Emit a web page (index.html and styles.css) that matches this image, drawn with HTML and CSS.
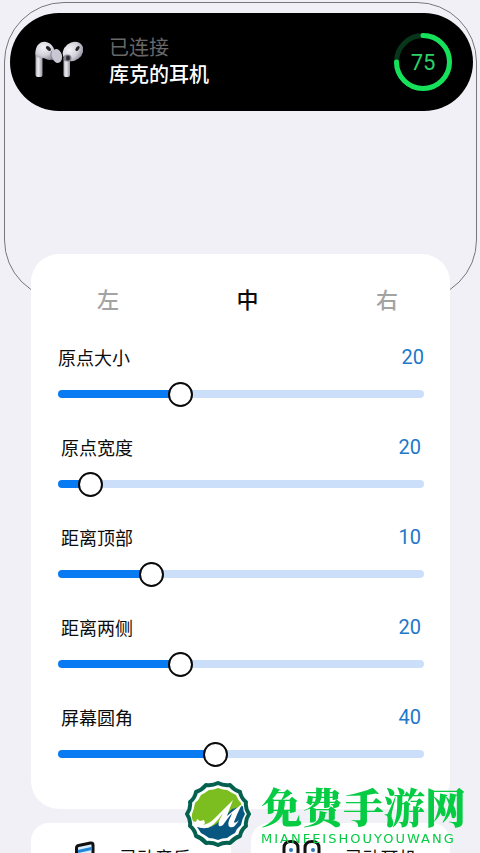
FILE: index.html
```html
<!DOCTYPE html>
<html lang="zh-CN">
<head>
    <meta charset="UTF-8">
    <meta name="viewport" content="width=device-width, initial-scale=1.0">
    <title>灵动设置</title>
    <link rel="stylesheet" href="styles.css">
</head>
<body>
    <header class="screen-frame">
        <div class="island">
            <svg class="earbuds" viewBox="0 0 48 38" aria-hidden="true">
                <defs>
                    <linearGradient id="stem" x1="0" x2="1" y1="0" y2="0">
                        <stop offset="0" stop-color="#aaa9b0"/>
                        <stop offset=".4" stop-color="#ededf1"/>
                        <stop offset="1" stop-color="#96959d"/>
                    </linearGradient>
                    <radialGradient id="bud" cx=".4" cy=".3" r=".75">
                        <stop offset="0" stop-color="#f4f3f8"/>
                        <stop offset=".6" stop-color="#d2d1d9"/>
                        <stop offset="1" stop-color="#8e8d98"/>
                    </radialGradient>
                </defs>
                <path d="M.5 12V35q0 2 2 2h3q2 0 2-2V18z" fill="url(#stem)"/>
                <path d="M.5 14C0 6 5 1 11 2c5 1 8 5 9 10 1 4-1 8-5 8-3 0-5-2-8-2-2 0-6 0-6.500-4z" fill="url(#bud)"/>
                <ellipse cx="22" cy="16" rx="5" ry="7" transform="rotate(-15 22 16)" fill="#c9c7d4"/>
                <path d="M16.500 11q-2 4 1 9" fill="none" stroke="#8f8d9b" stroke-width="1"/>
                <ellipse cx="13.500" cy="8.500" rx="3" ry="1.700" transform="rotate(42 13.500 8.500)" fill="#242428"/>
                <path d="M28.500 18V35q0 2 2 2h2.500q2 0 2-2V18z" fill="url(#stem)"/>
                <ellipse cx="38" cy="11.500" rx="11" ry="9" transform="rotate(-38 38 11.500)" fill="url(#bud)"/>
                <ellipse cx="32.500" cy="18" rx="4" ry="3.500" fill="#85838e"/>
                <ellipse cx="33" cy="18" rx="2" ry="2.500" fill="#2b2a30"/>
                <ellipse cx="42.500" cy="8.500" rx="2.800" ry="1.600" transform="rotate(-52 42.500 8.500)" fill="#242428"/>
            </svg>
            <div class="device">
                <span class="device-state">已连接</span>
                <span class="device-name">库克的耳机</span>
            </div>
            <div class="battery">
                <svg viewBox="0 0 58 58" aria-hidden="true">
                    <circle cx="29" cy="29" r="26.500" fill="none" stroke="#07361a" stroke-width="5"/>
                    <circle cx="29" cy="29" r="26.500" fill="none" stroke="#16e15a" stroke-width="5" stroke-linecap="round" pathLength="100" stroke-dasharray="75 25" transform="rotate(-90 29 29)"/>
                </svg>
                <span class="battery-value">75</span>
            </div>
        </div>
    </header>

    <main class="panel">
        <div class="tabs">
            <button class="tab" type="button">左</button>
            <button class="tab active" type="button">中</button>
            <button class="tab" type="button">右</button>
        </div>
        <div class="setting first">
            <div class="setting-head">
                <label for="dotSize">原点大小</label>
                <output for="dotSize">20</output>
            </div>
            <input type="range" id="dotSize" min="0" max="62" value="20" style="--fill: 32%">
        </div>
        <div class="setting">
            <div class="setting-head">
                <label for="dotWidth">原点宽度</label>
                <output for="dotWidth">20</output>
            </div>
            <input type="range" id="dotWidth" min="0" max="333" value="20" style="--fill: 6%">
        </div>
        <div class="setting">
            <div class="setting-head">
                <label for="topSpace">距离顶部</label>
                <output for="topSpace">10</output>
            </div>
            <input type="range" id="topSpace" min="0" max="42" value="10" style="--fill: 24%">
        </div>
        <div class="setting">
            <div class="setting-head">
                <label for="sideSpace">距离两侧</label>
                <output for="sideSpace">20</output>
            </div>
            <input type="range" id="sideSpace" min="0" max="62" value="20" style="--fill: 32%">
        </div>
        <div class="setting">
            <div class="setting-head">
                <label for="corner">屏幕圆角</label>
                <output for="corner">40</output>
            </div>
            <input type="range" id="corner" min="0" max="94" value="40" style="--fill: 42%">
        </div>
    </main>

    <nav class="tiles">
        <a class="tile" href="#music">
            <svg class="tile-icon" viewBox="0 0 40 40" aria-hidden="true">
                <path d="M15.500 31V11q0-2 2-2.500l12-2.500q2.500-.5 2.500 2v22" fill="#d9efff" stroke="#111" stroke-width="3"/>
                <path d="M17 14.500l13.500-3" stroke="#2286d8" stroke-width="3"/>
                <circle cx="11" cy="32" r="5" fill="#fff" stroke="#111" stroke-width="3"/>
                <circle cx="28" cy="30" r="5" fill="#fff" stroke="#111" stroke-width="3"/>
            </svg>
            <span>灵动音乐</span>
        </a>
        <a class="tile" href="#earbuds">
            <svg class="tile-icon wide" viewBox="0 0 46 40" aria-hidden="true">
                <path d="M10 37V22H3V11q0-6.500 7-6.500t7 6.500v26zM31 37V22h7V11q0-6.500-7-6.500t-7 6.500v26z" fill="#fff" stroke="#111" stroke-width="3" stroke-linejoin="round"/>
                <circle cx="10" cy="13" r="2" fill="#2d78bd"/>
                <circle cx="32" cy="13" r="2" fill="#2d78bd"/>
            </svg>
            <span>灵动耳机</span>
        </a>
    </nav>

    <div class="watermark">
        <svg class="watermark-logo" viewBox="0 0 66 66" aria-hidden="true">
            <path d="M33 2Q39 5 45 4Q49 9 55 11Q56 17 61 21Q60 27 64 33Q60 39 61 45Q56 49 55 55Q49 57 45 62Q39 61 33 64Q27 61 21 62Q17 57 11 55Q10 49 5 45Q6 39 2 33Q6 27 5 21Q10 17 11 11Q17 9 21 4Q27 5 33 2Z" fill="#fff" stroke="#04604f" stroke-width="4" stroke-linejoin="round"/>
            <path d="M9 42Q6 37 7 33Q9 28 10 22Q14 19 16 14Q20 12 24 9Q29 9 33 7Q38 9 42 9Q47 12 51 14Q53 19 56 22L57 26L48 28L34 44L18 47Z" fill="#7cbd20"/>
            <path d="M12 46Q24 50 35 40L47 28L58 25Q58 30 60 33Q57 38 56 44Q52 47 50 52Q46 54 42 57Q37 57 33 59Q28 57 24 57Q20 54 16 52Z" fill="#075780"/>
            <path d="M10 43Q21 47 31 36Q38 29 48 19Q44 29 42 35Q49 29 57 23Q52 33 49 41Q50 43 54 39Q49 48 45 46Q41 44 46 35L47 32Q42 38 38 44Q32 48 34 40L38 32Q34 38 29 43Q19 51 10 43Z" fill="#fff"/>
            <path d="M8 40l3 1 1-3 3 2 4-1 1 3-3 4-6-1z" fill="#fff"/>
        </svg>
        <div class="watermark-text">
            <strong>免费手游网</strong>
            <span>MIANFEISHOUYOUWANG</span>
        </div>
    </div>
</body>
</html>
```

FILE: styles.css
```css
* {
    box-sizing: border-box;
}
body {
    margin: 0;
    padding: 2px 0 0;
    background-color: #f1f0f7;
    color: #0c0c0c;
    font-family: Roboto, "Noto Sans CJK SC", sans-serif;
    font-size: 18px;
    overflow-x: hidden;
}
.screen-frame {
    height: 298px;
    margin: 0 3px 0 4px;
    padding: 10px 3px 0 5px;
    border: 1px solid #77777b;
    border-radius: 60px;
}
.island {
    display: flex;
    align-items: center;
    height: 98px;
    padding: 0 21px 0 25px;
    border-radius: 49px;
    background-color: #000;
}
.earbuds {
    width: 48px;
    height: 38px;
    margin-bottom: 6px;
}
.device {
    display: flex;
    flex-direction: column;
    flex: 1;
    margin-left: 26px;
    font-size: 20px;
    line-height: 27px;
}
.device-state {
    color: #68686a;
}
.device-name {
    color: #fff;
    font-weight: 500;
}
.battery {
    display: grid;
    place-items: center;
    width: 58px;
    height: 58px;
    color: #2bd267;
    font-size: 22px;
}
.battery svg,
.battery-value {
    grid-area: 1 / 1;
}
.battery svg {
    width: 58px;
    height: 58px;
}

/* settings card, overlaps the bottom of the frame */
.panel {
    position: relative;
    margin: -46px 30px 0 31px;
    padding: 26px 26px 16px 27px;
    border-radius: 28px;
    background-color: #fff;
}
.tabs {
    display: flex;
    justify-content: space-between;
    margin: 0 6px 27px 19px;
}
.tab {
    width: 62px;
    height: 36px;
    padding: 0;
    border: none;
    background: none;
    color: #a3a3a3;
    font-family: inherit;
    font-size: 22px;
    font-weight: 500;
    cursor: pointer;
}
.tab.active {
    color: #0c0c0c;
}
.setting {
    height: 90px;
}
.setting-head {
    display: flex;
    justify-content: space-between;
    align-items: center;
    height: 28px;
    padding: 0 3px;
}
.first .setting-head {
    padding: 0;
}
.setting output {
    color: #2178c9;
    font-size: 20px;
}
input[type="range"] {
    -webkit-appearance: none;
    appearance: none;
    display: block;
    width: 100%;
    height: 26px;
    margin: 10px 0 0;
    background: none;
}
input[type="range"]::-webkit-slider-runnable-track {
    height: 8px;
    border-radius: 4px;
    background: linear-gradient(to right, #087bf3 var(--fill), #cbdffb var(--fill));
}
input[type="range"]::-webkit-slider-thumb {
    -webkit-appearance: none;
    width: 25px;
    height: 25px;
    margin-top: -8px;
    border: 2px solid #0a0a0a;
    border-radius: 50%;
    background-color: #fff;
}
.tiles {
    display: grid;
    grid-template-columns: 1fr 1fr;
    gap: 20px;
    margin: 14px 30px 20px 31px;
}
.tile {
    display: flex;
    align-items: center;
    height: 68px;
    padding-left: 30px;
    border-radius: 18px;
    background-color: #fff;
    color: #0c0c0c;
    text-decoration: none;
}
.tile-icon {
    width: 40px;
    height: 40px;
    margin-right: 18px;
    fill: none;
}
.tile-icon.wide {
    width: 46px;
}
.watermark {
    position: fixed;
    left: 185px;
    bottom: 6px;
    display: flex;
    align-items: center;
    gap: 10px;
}
.watermark-logo {
    width: 66px;
    height: 66px;
}
.watermark-text {
    display: flex;
    flex-direction: column;
    color: #05cc43;
}
.watermark-text strong {
    font-family: "Noto Serif CJK SC", "Noto Sans CJK SC", serif;
    font-size: 41px;
    font-weight: 900;
    line-height: 50px;
}
.watermark-text span {
    font-family: "DejaVu Sans", sans-serif;
    font-size: 13px;
    line-height: 16px;
    letter-spacing: 2px;
}
```
